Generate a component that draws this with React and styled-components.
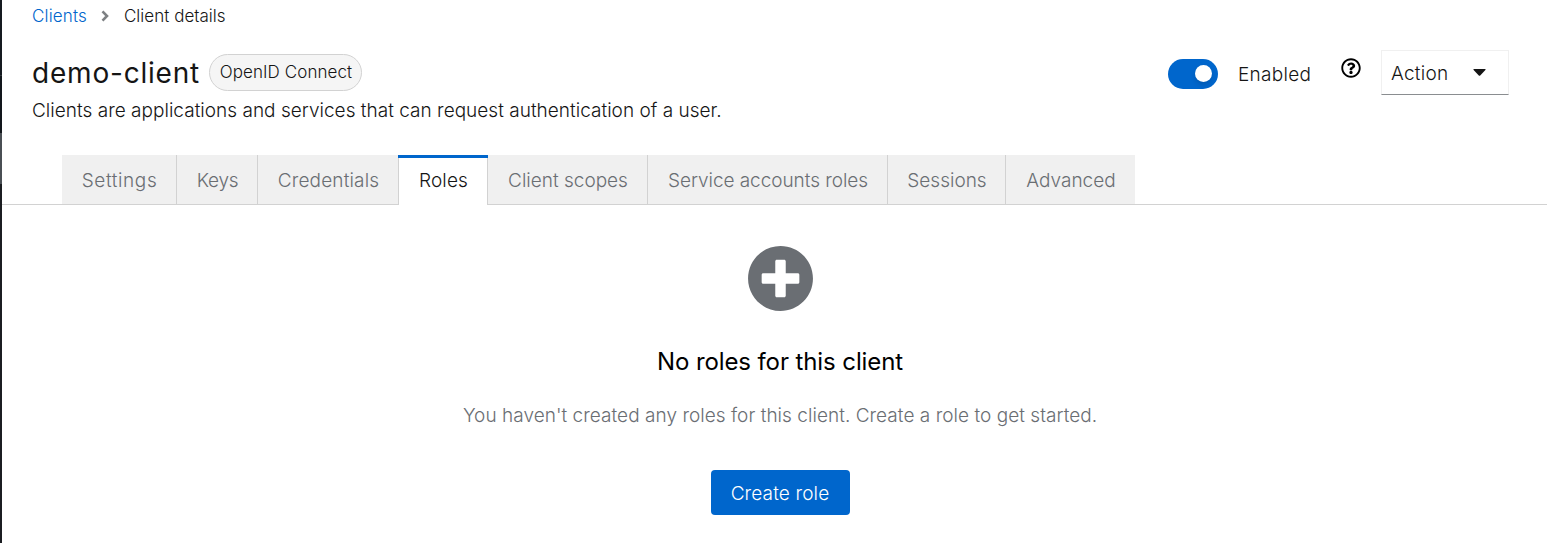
import React from "react";
import styled, { createGlobalStyle } from "styled-components";

const GlobalStyle = createGlobalStyle`
  *, *::before, *::after { box-sizing: border-box; }
  body {
    margin: 0;
    background: #fff;
    color: #151515;
    font-family: Inter, "Open Sans", sans-serif;
    font-weight: 300;
    overflow: hidden;
  }
  button { font: inherit; color: inherit; }
`;

const Page = styled.div`
  display: flex;
  height: 543px;
`;

const NavEdge = styled.div`
  flex: none;
  width: 2px;
  background: linear-gradient(#151a20 0 75px, #34393e 75px 76px, #12171c 76px 133px, #4a4f54 133px 184px, #1b1d21 184px);
`;

const Main = styled.main`
  flex: 1;
  min-width: 0;
  display: flex;
  flex-direction: column;
`;

const Label = styled.span`
  white-space: nowrap;
  letter-spacing: ${(p) => p.$track || 0}px;
`;

const Breadcrumb = styled.nav`
  display: flex;
  align-items: center;
  height: 32px;
  padding-left: 30px;
  font-size: 17px;
`;

const Crumb = styled(Label)`
  color: ${(p) => (p.$link ? "#0066cc" : "#151515")};
`;

const Chevron = styled.svg`
  width: 8px;
  height: 12px;
  margin: 0 15px 0 14px;
`;

const Header = styled.header`
  display: flex;
  justify-content: space-between;
  height: 123px;
  padding: 18px 38px 0 30px;
`;

const TitleRow = styled.div`
  display: flex;
  align-items: center;
  height: 44px;
`;

const Title = styled.h1`
  margin: 0;
  padding-top: 1px;
  font-size: 28px;
  font-weight: 400;
  line-height: 44px;
  letter-spacing: 0.8px;
`;

const Chip = styled.span`
  display: flex;
  align-items: center;
  justify-content: center;
  width: 153px;
  height: 37px;
  padding: 0 0 1px 1px;
  border: 1px solid #d2d2d2;
  border-radius: 19px;
  background: #f5f5f5;
  font-size: 17px;
`;

const TitleSlot = styled.div`
  width: 177px;
`;

const Description = styled.p`
  margin: 5px 0 0;
  font-size: 19px;
  line-height: 24px;
`;

const Controls = styled.div`
  display: flex;
  align-items: flex-start;
  font-size: 19px;
`;

const Toggle = styled.span`
  display: flex;
  justify-content: flex-end;
  align-items: center;
  width: 50px;
  height: 30px;
  margin-top: 9px;
  padding: 0 6px 1px 0;
  border-radius: 15px;
  background: #0066cc;
`;

const Knob = styled.span`
  width: 17px;
  height: 17px;
  border-radius: 50%;
  background: #fff;
  box-shadow: 0 3px 5px rgba(0, 0, 0, 0.12);
`;

const ToggleText = styled.span`
  width: 103px;
  padding-left: 20px;
  line-height: 50px;
`;

const HelpIcon = styled.svg`
  width: 20px;
  height: 20px;
  margin: 8px 20px 0 20px;
`;

const ActionButton = styled.button`
  display: flex;
  align-items: center;
  justify-content: space-between;
  width: 128px;
  height: 45px;
  padding: 1px 22px 0 9px;
  border: 1px solid #f0f0f0;
  border-bottom-color: #8a8d90;
  background: #fff;
`;

const Caret = styled.svg`
  width: 13px;
  height: 7px;
  margin-bottom: 1px;
`;

const Tabs = styled.div`
  display: flex;
  height: 50px;
  padding-left: 60px;
  box-shadow: inset 0 -1px #d2d2d2;
`;

const Tab = styled.button`
  position: relative;
  display: flex;
  align-items: center;
  justify-content: center;
  width: ${(p) => p.$width}px;
  height: 50px;
  padding: 0 0 0 1px;
  border: 0 solid #d2d2d2;
  border-right-width: ${(p) => (p.$divider ? 1 : 0)}px;
  border-left-width: ${(p) => (p.$active ? 1 : 0)}px;
  background: ${(p) => (p.$active ? "#fff" : "#f0f0f0")};
  box-shadow: inset 0 ${(p) => (p.$active ? "0 transparent" : "-1px #d2d2d2")};
  color: ${(p) => (p.$active ? "#151515" : "#6a6e73")};
  font-size: 19px;

  &::before {
    content: "";
    display: ${(p) => (p.$active ? "block" : "none")};
    position: absolute;
    top: 0;
    left: -1px;
    right: -1px;
    height: 3px;
    background: #0066cc;
  }
`;

const EmptyState = styled.section`
  display: flex;
  flex-direction: column;
  align-items: center;
  padding: 40px 0 0 11px;
`;

const PlusIcon = styled.svg`
  width: 67px;
  height: 67px;
`;

const EmptyTitle = styled.h2`
  margin: 34px 0 0;
  color: #000;
  font-size: 24px;
  font-weight: 400;
  line-height: 32px;
`;

const EmptyText = styled.p`
  margin: 23px 0 0;
  color: #6a6e73;
  font-size: 19px;
  line-height: 30px;
`;

const PrimaryButton = styled.button`
  width: 139px;
  height: 45px;
  margin-top: 39px;
  padding: 1px 0 0;
  border: 0;
  border-radius: 4px;
  background: #0066cc;
  color: #fff;
  font-size: 19px;
`;

const tabs = [
  { name: "Settings", width: 115, track: 0.6, divider: true },
  { name: "Keys", width: 81, track: -0.25, divider: true },
  { name: "Credentials", width: 140, track: 0.15 },
  { name: "Roles", width: 90, track: 0.1, divider: true, active: true },
  { name: "Client scopes", width: 160, track: 0, divider: true },
  { name: "Service accounts roles", width: 240, track: -0.05, divider: true },
  { name: "Sessions", width: 118, track: 0, divider: true },
  { name: "Advanced", width: 129, track: 0 },
];

export default function App() {
  return (
    <>
      <GlobalStyle />
      <Page>
        <NavEdge />
        <Main>
          <Breadcrumb>
            <Crumb $link $track={0.15}>Clients</Crumb>
            <Chevron viewBox="0 0 8 12">
              <path d="M1.5 1.4 6 6 1.5 10.6" fill="none" stroke="#7d8083" strokeWidth="2.6" />
            </Chevron>
            <Crumb $track={0.03}>Client details</Crumb>
          </Breadcrumb>
          <Header>
            <div>
              <TitleRow>
                <TitleSlot>
                  <Title>demo-client</Title>
                </TitleSlot>
                <Chip>
                  <Label $track={0.08}>OpenID Connect</Label>
                </Chip>
              </TitleRow>
              <Description>
                <Label $track={0.02}>
                  Clients are applications and services that can request authentication of a user.
                </Label>
              </Description>
            </div>
            <Controls>
              <Toggle>
                <Knob />
              </Toggle>
              <ToggleText>
                <Label $track={0.3}>Enabled</Label>
              </ToggleText>
              <HelpIcon viewBox="0 0 512 512">
                <path d="M256 8C119.043 8 8 119.083 8 256c0 136.997 111.043 248 248 248s248-111.003 248-248C504 119.083 392.957 8 256 8zm0 448c-110.532 0-200-89.431-200-200 0-110.495 89.472-200 200-200 110.491 0 200 89.471 200 200 0 110.53-89.431 200-200 200zm107.244-255.2c0 67.052-72.421 68.084-72.421 92.863V300c0 6.627-5.373 12-12 12h-45.647c-6.627 0-12-5.373-12-12v-8.659c0-35.745 27.1-50.034 47.579-61.516 17.561-9.845 28.324-16.541 28.324-29.579 0-17.246-21.999-28.693-39.784-28.693-23.189 0-33.894 10.977-48.942 29.969-4.057 5.12-11.46 6.071-16.666 2.124l-27.824-21.098c-5.107-3.872-6.251-11.066-2.644-16.363C184.846 131.491 214.94 112 261.794 112c49.071 0 101.45 38.304 101.45 88.8zM298 368c0 23.159-18.841 42-42 42s-42-18.841-42-42 18.841-42 42-42 42 18.841 42 42z" />
              </HelpIcon>
              <ActionButton>
                <Label $track={0.25}>Action</Label>
                <Caret viewBox="0 0 13 7">
                  <path d="M1 0h11q1 .1.4.9L7.2 6.5q-.7.6-1.4 0L.6.9Q0 .1 1 0z" fill="#151515" />
                </Caret>
              </ActionButton>
            </Controls>
          </Header>
          <Tabs>
            {tabs.map((t) => (
              <Tab key={t.name} $width={t.width} $active={t.active} $divider={t.divider}>
                <Label $track={t.track}>{t.name}</Label>
              </Tab>
            ))}
          </Tabs>
          <EmptyState>
            <PlusIcon viewBox="0 0 512 512">
              <path
                fill="#6a6e73"
                d="M256 8C119 8 8 119 8 256s111 248 248 248 248-111 248-248S393 8 256 8zm144 276c0 6.6-5.4 12-12 12h-92v92c0 6.6-5.4 12-12 12h-56c-6.6 0-12-5.4-12-12v-92h-92c-6.6 0-12-5.4-12-12v-56c0-6.6 5.4-12 12-12h92v-92c0-6.6 5.4-12 12-12h56c6.6 0 12 5.4 12 12v92h92c6.6 0 12 5.4 12 12v56z"
              />
            </PlusIcon>
            <EmptyTitle>
              <Label $track={-0.1}>No roles for this client</Label>
            </EmptyTitle>
            <EmptyText>
              <Label $track={0.04}>
                You haven't created any roles for this client. Create a role to get started.
              </Label>
            </EmptyText>
            <PrimaryButton>
              <Label $track={0.15}>Create role</Label>
            </PrimaryButton>
          </EmptyState>
        </Main>
      </Page>
    </>
  );
}
